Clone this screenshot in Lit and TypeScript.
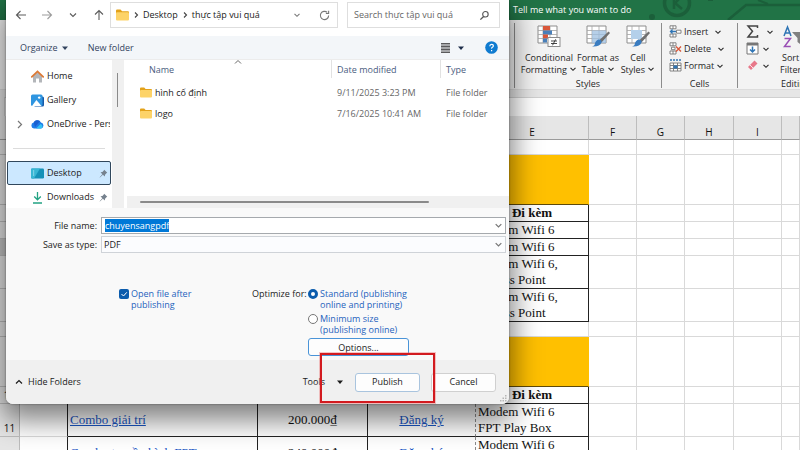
import { LitElement, html, css, svg, nothing } from "lit";
import { customElement } from "lit/decorators.js";

const chevron = (cls = "chev") => html`<svg class=${cls} viewBox="0 0 8 8"><path d="M1.500 2.800 4 5.300 6.500 2.800" fill="none" stroke="currentColor" stroke-width="1.100"/></svg>`;
const caret = () => html`<svg class="chev" viewBox="0 0 8 8"><path d="M1 2.500h6L4 6z" fill="currentColor"/></svg>`;

const folder = () => html`<svg class="folder" viewBox="0 0 12 11">
  <path d="M0 1.500Q0 .5 1 .5h3.200L5.600 2H11q1 0 1 1v2H0z" fill="#e3a21a"/>
  <rect x="0" y="3" width="12" height="7.600" rx="1" fill="#fdd368"/></svg>`;

const treeIcon: Record<string, unknown> = {
  home: svg`<path d="M2 6v6.500h3V8.500h3v4h3V6L6.500 2z" fill="#b3b6ba"/><path d="M.8 6.800 6.500 1.400l5.700 5.400" fill="none" stroke="#dd7a35" stroke-width="1.800" stroke-linecap="round"/>`,
  gallery: svg`<rect x="3" y="2.500" width="10" height="10" rx="1.500" fill="#1759a8"/><rect x="0" y=".5" width="11.500" height="11.500" rx="1.500" fill="#2f95e0"/><path d="M1 12 5.400 6 10.500 12z" fill="#fff"/><circle cx="8.200" cy="3.600" r="1.200" fill="#fff"/>`,
  onedrive: svg`<path d="M3 10.500a3 3 0 0 1-.3-5.900A4 4 0 0 1 10 4.600a3 3 0 0 1 0 5.900z" fill="#1f7ce8"/><path d="M5 10.500 9.500 6a2.500 2.500 0 0 1 1 4.500z" fill="#35c1f5"/><path d="M2.700 4.600A4 4 0 0 1 9 3.300L4 9z" fill="#1a5fd0"/>`,
  desktop: svg`<rect x="0" y="1.500" width="13" height="10" rx="1.200" fill="#1591b8"/><path d="M0 2.500q0-1 1-1h8L3 11.500H1q-1 0-1-1z" fill="#38b6d4"/><path d="M2 4h1.200M2 6h1.200M2 8h1.200" stroke="#d9f6ff" stroke-width=".8"/>`,
  downloads: svg`<path d="M6.500 1v7.500M3.200 5.500l3.300 3.300 3.300-3.300M2 12h9" fill="none" stroke="#22a383" stroke-width="1.300"/>`,
};
const pin = () => html`<svg class="pin" viewBox="0 0 10 10"><path d="M5.800.8 9.200 4.200 8.200 4.700 6.700 6.300 6.500 8.300 4.300 6.300 1 9.400.7 9.100 3.700 5.700 1.700 3.500 3.800 3.300 5.300 1.800z" fill="#76828e"/></svg>`;

const grid = svg`<path d="M1 1h19v17H1z" fill="#fff" stroke="#8d8d8d"/><path d="M1 5.500h19M1 9.500h19M1 13.500h19M6 1v17M13 1v17" stroke="#a5a5a5" stroke-width=".8"/>`;
const brush = svg`<path d="M22.500 6.500 24 8l-8.500 9.500-2.500-2z" fill="#6f6f6f"/><path d="M13 14.500q3 .5 2.500 3-1.500 4.500-9.500 4 3-1 3-3.500 1.500-3.500 4-3.500z" fill="#3a7cc0"/>`;

const big = [
  { lines: ["Conditional", "Formatting"], cls: "w1", art: svg`${grid}<path d="M6 1h7v4.500H6z" fill="#d9573a"/><path d="M6 5.500h9v4H6z" fill="#4a80ba"/><path d="M6 9.500h5v4H6z" fill="#d9573a"/><path d="M6 13.500h4v4H6z" fill="#4a80ba"/><rect x="11" y="12.500" width="12" height="9" fill="#fff" stroke="#8d8d8d"/><path d="M14 16h6M14 18.500h6M18.700 14.300l-3.200 6" stroke="#333" stroke-width=".9"/>` },
  { lines: ["Format as", "Table"], cls: "w2", art: svg`${grid}<path d="M6 5.500h14V18H6z" fill="#9dbfe0" opacity=".75"/>${brush}` },
  { lines: ["Cell", "Styles"], cls: "w3", art: svg`${grid}<path d="M5 5h11v9H5z" fill="#b4d0ea"/>${brush}` },
];

const small = [
  { t: "Insert", cls: "far", art: svg`<path d="M1 .8h6v3H1zM4 .8v3M1 9h6v3H1zM4 9v3M7.500 5.200H12v3H7.500z" fill="#fff" stroke="#777" stroke-width=".9"/><path d="M7 6.500H1.500M3.500 4.500l-2 2 2 2" fill="none" stroke="#2f75b5" stroke-width="1.300"/>` },
  { t: "Delete", cls: "far", art: svg`<path d="M1 .8h6v3H1zM4 .8v3M1 9h6v3H1zM4 9v3M2.500 5.200H6v2.500H2.500z" fill="#fff" stroke="#777" stroke-width=".9"/><path d="M7 4.500l5 5M12 4.500l-5 5" stroke="#d9573a" stroke-width="1.400"/>` },
  { t: "Format", cls: "", art: svg`<path d="M1 1h11" stroke="#2f75b5" stroke-width="1.300" stroke-dasharray="2 1"/><path d="M1 4h11v8H1zM1 6.500h11M1 9.500h11M4.500 4v8M8.500 4v8" fill="#fff" stroke="#777" stroke-width=".9"/><path d="M4.500 6.500h4v3h-4z" fill="#2f75b5"/>` },
];

type Row = { n: string; h: string; kind: string; active?: boolean; a?: string; b?: string; c?: string; e?: string[] };
const rows: Row[] = [
  { n: "1", h: "r15", kind: "gap" },
  { n: "2", h: "r50", kind: "gold" },
  { n: "3", h: "r17", kind: "head" },
  { n: "4", h: "r17", kind: "data", e: ["Modem Wifi 6"] },
  { n: "5", h: "r17", kind: "data", active: true, e: ["Modem Wifi 6"] },
  { n: "6", h: "r33", kind: "data", e: ["Modem Wifi 6,", "Access Point"] },
  { n: "7", h: "r33", kind: "data", e: ["Modem Wifi 6,", "Access Point"] },
  { n: "8", h: "r15", kind: "gap" },
  { n: "9", h: "r50", kind: "gold" },
  { n: "10", h: "r17", kind: "head" },
  { n: "11", h: "r33", kind: "data", a: "Combo giải trí", b: "200.000₫", c: "Đăng ký", e: ["Modem Wifi 6", "FPT Play Box"] },
  { n: "12", h: "r33", kind: "data", a: "Combo truyền hình FPT", b: "249.000₫", c: "Đăng ký", e: ["Modem Wifi 6", "FPT Play Box"] },
];

@customElement("excel-sheet")
class ExcelSheet extends LitElement {
  static styles = css`
    :host { display: block; font: 9px/12px "Open Sans", "Noto Sans", sans-serif; color: #262626; }
    button { font: inherit; color: inherit; background: none; border: 0; padding: 0; margin: 0; }
    .title { height: 20px; background: #217346; color: #fff; display: flex; justify-content: space-between; padding-left: 513px; overflow: hidden; }
    .title button { line-height: 18px; white-space: nowrap; }
    .circuit { width: 160px; height: 20px; flex: none; }
    .ribbon { display: grid; grid-template-columns: 514px 147px 76px 1fr; height: 70px; background: #f3f3f3; border-bottom: 1px solid #dcdcdc; box-sizing: border-box; overflow: hidden; }
    .group { border-left: 1px solid #8c8c8c; margin: 3px 0 1px; display: flex; flex-direction: column; justify-content: space-between; }
    .group h2 { margin: 0; font: inherit; text-align: center; line-height: 8px; }
    .bigs { display: flex; padding-left: 5px; }
    .big { display: flex; flex-direction: column; align-items: center; white-space: nowrap; }
    .w1 { width: 58px; }
    .w2, .w3 { width: 40px; }
    .big svg.art { width: 25px; height: 24px; margin: 2px 0 3px; }
    .smalls { display: flex; flex-direction: column; padding-left: 7px; }
    .small { display: flex; align-items: center; height: 17px; gap: 2px; }
    .small svg.art { width: 13px; height: 13px; }
    .far .chev { margin-left: 4px; }
    .chev { width: 8px; height: 8px; }
    .edit { display: flex; overflow: hidden; }
    .edit .smalls { padding-left: 8px; width: 34px; flex: none; }
    .edit .small { gap: 3px; }
    .sort { flex: none; display: flex; flex-direction: column; align-items: flex-start; white-space: nowrap; }
    .sort svg.art { width: 36px; height: 24px; margin: 2px 0 3px; }
    .sort .first { padding-left: 2px; }
    .editing { overflow: hidden; }
    .editing h2 { text-align: left; padding-left: 43px; }
    .formula { background: #e6e6e6; padding-top: 7px; height: 19px; }
    .formula div { height: 18px; margin-left: 4px; background: #fff; border: solid #d0d0d0; border-width: 1px 0 0 1px; }
    table { width: 100%; table-layout: fixed; border-spacing: 0; font: 13px/16px "Liberation Serif", serif; color: #111; }
    .c0 { width: 20px; } .c48 { width: 48px; } .c49 { width: 49px; } .cb { width: 190px; } .cc { width: 110px; } .cd { width: 108px; } .ce { width: 113px; }
    th, td { box-sizing: border-box; padding: 0; border: solid #d9d9d9; border-width: 0 1px 1px 0; background: #fff; overflow: hidden; white-space: nowrap; }
    thead th { height: 24px; background: #e6e6e6; border-color: #bdbdbd; border-bottom-color: #9b9b9b; font: 10px/12px "Open Sans", "Noto Sans", sans-serif; padding-top: 8px; }
    tbody th { background: #e6e6e6; border-color: #bdbdbd; font: 10px/12px "Open Sans", sans-serif; vertical-align: middle; }
    .r33 th { padding-top: 16px; }
    th.active { background: #c6c6c6; }
    .r15 > * { height: 15px; } .r17 > * { height: 17px; } .r33 > * { height: 33px; } .r50 > * { height: 50px; }
    .r15 > th { line-height: 10px; }
    .gold { background: #ffc000; border-color: #ffc000; border-bottom-color: #5f4a0a; }
    .k { border-color: #222; text-align: center; }
    .kl { border-right-color: #222; }
    .left { text-align: left; padding-left: 2px; }
    .dash { border-right: 1px dashed #8b8b8b; }
    .b { font-weight: bold; }
    a { color: #1a56c4; text-decoration: underline; }
  `;
  private row(r: Row) {
    const empties = [1, 2, 3, 4, 5].map(() => html`<td></td>`);
    const mid = r.kind === "gap" ? html`<td></td><td></td><td></td><td></td>`
      : r.kind === "gold" ? html`<td class="gold" colspan="4"></td>`
      : r.kind === "head" ? html`<td class="k"></td><td class="k"></td><td class="k"></td><td class="k b">Đi kèm</td>`
      : html`<td class="k left">${r.a ? html`<a href="#">${r.a}</a>` : nothing}</td><td class="k">${r.b}</td><td class="k dash">${r.c ? html`<a href="#">${r.c}</a>` : nothing}</td><td class="k left">${r.e!.map((l, i) => (i ? html`<br>${l}` : l))}</td>`;
    return html`<tr class=${r.h}><th scope="row" class=${r.active ? "active" : ""}>${r.n}</th><td class=${r.kind === "data" || r.kind === "head" ? "kl" : ""}></td>${mid}${empties}</tr>`;
  }
  render() {
    return html`
      <div class="title"><button>Tell me what you want to do</button>
        <svg class="circuit" viewBox="0 0 160 20"><g fill="none" stroke="#1b5f3a"><circle cx="37" cy="3" r="12.500" stroke-width="3.500"/><path d="M34-4V9M41-3 35 3l7 6" stroke-width="2.500"/><path d="M88 20 106 5h54" stroke-width="2.500"/><path d="M68 0h5M118 0l10 4" stroke-width="2"/></g><circle cx="12" cy="17" r="3" fill="#1b5f3a"/></svg>
      </div>
      <div class="ribbon">
        <div></div>
        <div class="group">
          <div class="bigs">${big.map((b) => html`<button class="big ${b.cls}"><svg class="art" viewBox="0 0 25 24">${b.art}</svg><span>${b.lines[0]}</span><span>${b.lines[1]} ${chevron()}</span></button>`)}</div>
          <h2>Styles</h2>
        </div>
        <div class="group">
          <div class="smalls">${small.map((s) => html`<button class="small ${s.cls}"><svg class="art" viewBox="0 0 13 13">${s.art}</svg><span>${s.t}</span>${chevron()}</button>`)}</div>
          <h2>Cells</h2>
        </div>
        <div class="group editing">
          <div class="edit">
            <div class="smalls">
              <button class="small far" aria-label="AutoSum"><svg class="art" viewBox="0 0 13 13"><path d="M11.500 3V1H2l4.500 5.300L2 12h9.500v-2" fill="none" stroke="#444" stroke-width="1.500"/></svg>${chevron()}</button>
              <button class="small" aria-label="Fill"><svg class="art" viewBox="0 0 13 13"><path d="M1 1h11v11H1z" fill="#fff" stroke="#777"/><path d="M1 1h11v2.500H1z" fill="#777"/><path d="M6.500 4.500v5.500M4 7.500l2.500 2.500L9 7.500" fill="none" stroke="#2f75b5" stroke-width="1.500"/></svg>${chevron()}</button>
              <button class="small" aria-label="Clear"><svg class="art" viewBox="0 0 13 13"><path d="M8.500 1.500 11.500 4.500 5 11 2 8z" fill="#e8788a"/><path d="M4 6 7 9" stroke="#fff" stroke-width=".8"/></svg>${chevron()}</button>
            </div>
            <button class="sort"><svg class="art" viewBox="0 0 36 24"><path d="M4 11 7.500 2 11 11M5.200 8h4.600" fill="none" stroke="#2f75b5" stroke-width="1.500"/><path d="M4.500 13.500h6L4.500 21.500h6.200" fill="none" stroke="#9a4fb5" stroke-width="1.500"/><path d="M12 7h15l-5.500 6v7l-4-3v-4z" fill="#808080"/></svg><span class="first">Sort &amp;</span><span>Filter ${chevron()}</span></button>
          </div>
          <h2>Editing</h2>
        </div>
      </div>
      <div class="formula"><div></div></div>
      <table>
        <colgroup><col class="c0"><col class="c48"><col class="cb"><col class="cc"><col class="cd"><col class="ce"><col class="c48"><col class="c48"><col class="c49"><col class="c48"><col></colgroup>
        <thead><tr><th></th>${["A", "B", "C", "D", "E", "F", "G", "H", "I", ""].map((c) => html`<th scope="col">${c}</th>`)}</tr></thead>
        <tbody>${rows.map((r) => this.row(r))}</tbody>
      </table>`;
  }
}

type Place = { t: string; i: string; open?: boolean; pin?: boolean; on?: boolean };
const tree: (Place | null)[] = [
  { t: "Home", i: "home" }, { t: "Gallery", i: "gallery" }, { t: "OneDrive - Personal", i: "onedrive", open: true },
  null,
  { t: "Desktop", i: "desktop", pin: true, on: true }, { t: "Downloads", i: "downloads", pin: true },
];

const files = [
  ["hình cố định", "9/11/2025 3:23 PM", "File folder"],
  ["logo", "7/16/2025 10:41 AM", "File folder"],
];

@customElement("save-dialog")
class SaveDialog extends LitElement {
  static styles = css`
    :host { display: flex; flex-direction: column; font: 9px/12px "Open Sans", "Noto Sans", sans-serif; color: #1b1b1b; background: #f9f9f9; border-radius: 0 0 7px 7px; overflow: hidden; }
    button, input, select { font: inherit; color: inherit; margin: 0; padding: 0; box-sizing: border-box; }
    button { background: none; border: 0; }
    .nav { display: flex; align-items: center; background: #fff; padding: 2px 9px 8px; color: #5c5c5c; }
    .arrows { display: flex; gap: 12px; flex: none; width: 95px; }
    .arrows button { width: 14px; height: 14px; }
    .arrows svg { width: 12px; height: 12px; display: block; }
    .dim { opacity: .6; }
    .addr, .search { box-sizing: border-box; height: 26px; border: 1px solid #dedede; display: flex; align-items: center; }
    .addr { flex: 1; padding: 0 7px 0 5px; gap: 3px; color: #222; }
    .addr .folder { width: 13px; height: 12px; }
    .addr .end { margin-left: auto; display: flex; gap: 18px; align-items: center; color: #777; }
    .addr .end button { display: flex; }
    .search { width: 153px; flex: none; margin-left: 9px; padding: 0 9px 0 6px; }
    .search input { flex: 1; min-width: 0; border: 0; outline: 0; background: none; }
    .search input::placeholder { color: #666; opacity: 1; }
    .ic { width: 11px; height: 11px; }
    .chev { width: 8px; height: 8px; flex: none; }
    .tools { display: flex; align-items: center; height: 24px; background: #f3f6f9; color: #33445f; padding: 0 11px 0 14px; border-bottom: 1px solid #ececec; box-sizing: border-box; }
    .tools button { display: flex; align-items: center; gap: 3px; }
    .tools .new { margin-left: 19px; }
    .tools .view { margin-left: auto; gap: 6px; color: #1d2d4a; }
    .tools .help { margin-left: 20px; }
    .tools .help svg { width: 13px; height: 13px; }
    .main { display: flex; height: 148px; background: #fff; }
    .tree { width: 106px; flex: none; overflow: hidden; padding-top: 4px; box-sizing: border-box; }
    .item { display: flex; align-items: center; width: 104px; height: 24px; margin-left: 1px; padding: 0 2px 0 8px; box-sizing: border-box; border: 1px solid transparent; border-radius: 2px; gap: 3px; white-space: nowrap; overflow: hidden; }
    .item .tw { width: 12px; height: 9px; flex: none; color: #777; }
    .item .art { width: 13px; height: 13px; flex: none; }
    .item .pin { width: 9px; height: 9px; margin-left: auto; }
    .on { background: #cce8ff; border-color: #30475c; }
    .tree hr { border: 0; border-top: 1px solid #dcdcdc; margin: 12px 7px; height: 0; }
    .vbar { width: 12px; flex: none; background: #f0f0f0; padding: 13px 0 0 5px; box-sizing: border-box; }
    .vbar div { width: 1px; height: 34px; background: #8a8a8a; }
    .list { flex: 1; display: flex; flex-direction: column; justify-content: space-between; margin-left: 3px; }
    table { border-spacing: 0; width: 100%; table-layout: fixed; }
    .cn { width: 205px; } .cd { width: 109px; }
    .list th { font-weight: normal; text-align: left; color: #4a5d80; height: 18px; padding: 2px 0 0 5px; border-right: 1px solid #e2e2e2; box-sizing: border-box; }
    .list th:first-child { padding-left: 22px; }
    .list th:last-child { border: 0; }
    .list td { height: 21px; padding: 0 0 0 5px; color: #666; }
    .list tr.gap td { height: 4px; }
    .list td:first-child { padding-left: 13px; color: #1b1b1b; }
    .file { display: flex; align-items: center; gap: 3px; }
    .folder { width: 12px; height: 11px; flex: none; }
    .sortmark { position: absolute; left: 228px; top: 58px; width: 8px; height: 8px; color: #666; }
    .hbar { height: 12px; background: #f0f0f0; padding: 5px 80px 0 13px; box-sizing: border-box; }
    .hbar div { height: 2px; background: #8a8a8a; border-radius: 1px; }
    .fields { display: grid; grid-template-columns: 91px 1fr; column-gap: 4px; row-gap: 2px; padding: 9px 3px 0 0; align-items: center; }
    .fields label { text-align: right; }
    .combo { display: flex; align-items: center; height: 17px; border: 1px solid #a5a9ad; background: #fff; padding: 0 2px 0 3px; box-sizing: border-box; color: #222; }
    .combo input, .combo select { flex: 1; min-width: 0; border: 0; outline: 0; background: none; height: 13px; appearance: none; }
    .combo.type { background: #fbfcfe; border-color: #cfd3d8; padding-left: 2px; }
    .combo input::selection { background: #0078d7; color: #fff; }
    .combo .chev { color: #777; width: 9px; height: 9px; }
    .opts { display: grid; grid-template-columns: 133px 1fr; padding: 35px 0 3px 113px; color: #1f63bd; line-height: 11px; }
    .opts label { display: flex; gap: 2px; align-items: flex-start; }
    .opts input { appearance: none; width: 10px; height: 10px; flex: none; margin-top: 1px; border: 1px solid #777; border-radius: 50%; background: #fff; }
    .opts input[type="checkbox"] { border-radius: 2px; border: 0; background: #0b5cad url('data:image/svg+xml,<svg xmlns="http://www.w3.org/2000/svg" viewBox="0 0 10 10"><path d="M2.500 5l2 2 3.300-3.700" fill="none" stroke="white"/></svg>'); }
    .opts input[type="radio"]:checked { border: 3px solid #0b5cad; }
    .radios { display: grid; grid-template-columns: 56px 1fr; row-gap: 3px; align-content: start; }
    .radios .cap { color: #1b1b1b; white-space: nowrap; }
    .radios label { grid-column: 2; }
    .optbtn { grid-column: 2; width: 101px; height: 18px; border: 1px solid #4a94d8; border-radius: 3px; background: #fdfdfd; color: #1b1b1b; }
    .foot { margin-top: auto; height: 44px; display: flex; align-items: center; background: #f0f0f0; padding: 0 13px 0 9px; box-sizing: border-box; }
    .foot button { display: flex; align-items: center; justify-content: center; }
    .hide { gap: 5px; }
    .toolsbtn { margin-left: auto; gap: 11px; }
    .foot .push { width: 65px; height: 19px; background: #fdfdfd; border: 1px solid #d0d0d0; border-radius: 3px; margin-left: 11px; }
    .foot .primary { border-color: #a9c4de; }
    .grip { position: absolute; right: 2px; bottom: 2px; width: 7px; height: 7px; color: #b5b5b5; }
  `;
  firstUpdated() {
    const field = this.renderRoot.querySelector<HTMLInputElement>("#fname");
    field?.focus();
    field?.select();
  }
  render() {
    const line = (d: string) => html`<svg viewBox="0 0 12 12"><path d=${d} fill="none" stroke="currentColor" stroke-width="1.100"/></svg>`;
    const step = html`<svg class="chev" viewBox="0 0 8 8"><path d="M3 1.500 5.500 4 3 6.500" fill="none" stroke="#444" stroke-width="1.100"/></svg>`;
    return html`
      <div class="nav">
        <div class="arrows">
          <button aria-label="Back">${line("M11 6H1.500M5.500 2 1.500 6l4 4")}</button>
          <button class="dim" aria-label="Forward">${line("M1 6h9.500M6.500 2l4 4-4 4")}</button>
          <button aria-label="Recent">${line("M3 4.500 6 7.500 9 4.500")}</button>
          <button aria-label="Up">${line("M6 11V1.500M2 5.500l4-4 4 4")}</button>
        </div>
        <div class="addr">${folder()}${step}<span>Desktop</span>${step}<span>thực tập vui quá</span>
          <span class="end"><button aria-label="History">${chevron()}</button><button aria-label="Refresh"><svg class="ic" viewBox="0 0 12 12"><path d="M10.500 6A4.500 4.500 0 1 1 9 2.600M10.500 .8v3h-3" fill="none" stroke="currentColor" stroke-width="1.200"/></svg></button></span>
        </div>
        <div class="search"><input type="search" aria-label="Search" placeholder="Search thực tập vui quá"><svg class="ic" viewBox="0 0 12 12"><circle cx="7" cy="4.700" r="3" fill="none" stroke="#555" stroke-width="1.200"/><path d="M5 7 1.500 10.500" stroke="#555" stroke-width="1.500"/></svg></div>
      </div>
      <div class="tools">
        <button>Organize ${caret()}</button><button class="new">New folder</button>
        <button class="view" aria-label="View"><svg class="ic" viewBox="0 0 11 11"><path d="M1 1.500h9M1 4.500h9M1 7.500h9M1 10.500h9M1 3h9M1 6h9M1 9h9" stroke="#333" stroke-width=".8"/></svg>${caret()}</button>
        <button class="help" aria-label="Help"><svg viewBox="0 0 13 13"><circle cx="6.500" cy="6.500" r="6.300" fill="#0f7bd0"/><path d="M4.800 5.200q0-1.900 1.800-1.900t1.700 1.600q0 .9-.9 1.400t-.8 1.300M6.600 8.900v1.300" fill="none" stroke="#fff" stroke-width="1.200"/></svg></button>
      </div>
      <div class="main">
        <div class="tree">${tree.map((t) => t ? html`<div class="item ${t.on ? "on" : ""}"><svg class="tw" viewBox="0 0 12 9">${t.open ? svg`<path d="M2 1 5.500 4.500 2 8" fill="none" stroke="currentColor" stroke-width="1.200"/>` : nothing}</svg><svg class="art" viewBox="0 0 13 13">${treeIcon[t.i]}</svg><span>${t.t}</span>${t.pin ? pin() : nothing}</div>` : html`<hr>`)}</div>
        <div class="vbar"><div></div></div>
        <div class="list">
          <table><colgroup><col class="cn"><col class="cd"><col></colgroup>
            <thead><tr><th>Name</th><th>Date modified</th><th>Type</th></tr></thead>
            <tbody><tr class="gap"><td></td></tr>${files.map((f) => html`<tr><td><span class="file">${folder()}${f[0]}</span></td><td>${f[1]}</td><td>${f[2]}</td></tr>`)}</tbody>
          </table>
          <div class="hbar"><div></div></div>
        </div>
        <svg class="sortmark" viewBox="0 0 8 8"><path d="M1 5.500 4 2.500l3 3" fill="none" stroke="currentColor"/></svg>
      </div>
      <div class="fields">
        <label for="fname">File name:</label><div class="combo"><input id="fname" type="text" value="chuyensangpdf" spellcheck="false">${chevron()}</div>
        <label for="ftype">Save as type:</label><div class="combo type"><select id="ftype"><option>PDF</option></select>${chevron()}</div>
      </div>
      <div class="opts">
        <label><input type="checkbox" checked><span>Open file after<br>publishing</span></label>
        <div class="radios" role="radiogroup" aria-labelledby="opt">
          <span class="cap" id="opt">Optimize for:</span>
          <label><input type="radio" name="q" checked><span>Standard (publishing<br>online and printing)</span></label>
          <label><input type="radio" name="q"><span>Minimum size<br>(publishing online)</span></label>
          <button class="optbtn">Options...</button>
        </div>
      </div>
      <div class="foot">
        <button class="hide"><svg class="chev" viewBox="0 0 8 8"><path d="M1 5.500 4 2.500l3 3" fill="none" stroke="currentColor" stroke-width="1.200"/></svg>Hide Folders</button>
        <button class="toolsbtn">Tools ${caret()}</button>
        <button class="push primary">Publish</button>
        <button class="push">Cancel</button>
      </div>
      <svg class="grip" viewBox="0 0 7 7"><path d="M5 0h1.500v1.500H5zM5 2.500h1.500V4H5zM5 5h1.500v1.500H5zM2.500 2.500H4V4H2.500zM2.500 5H4v1.500H2.500zM0 5h1.500v1.500H0z" fill="currentColor"/></svg>`;
  }
}

@customElement("app-root")
class AppRoot extends LitElement {
  static styles = css`
    :host { display: block; position: relative; height: 100vh; overflow: hidden; background: #fff; }
    save-dialog { position: absolute; left: 6px; top: 0; width: 503px; height: 404px; box-shadow: 0 12px 28px 4px rgba(0, 0, 0, .5), 0 0 2px rgba(0, 0, 0, .5); }
    .mark { position: absolute; left: 320px; top: 353px; width: 115px; height: 50px; box-sizing: border-box; border: 2px solid #d21a1f; outline: 1px solid rgba(235, 110, 110, .4); pointer-events: none; }
  `;
  render() {
    return html`<excel-sheet></excel-sheet><save-dialog></save-dialog><div class="mark"></div>`;
  }
}
